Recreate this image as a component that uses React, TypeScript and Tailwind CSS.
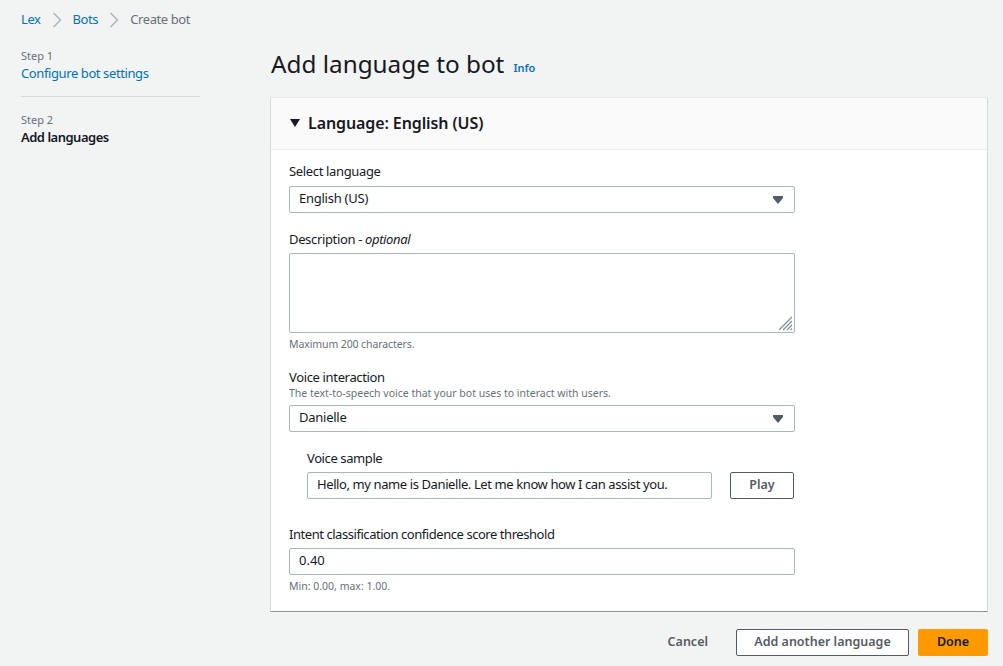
import React from 'react';

function Chevron() {
    return (
        <svg width="10" height="16" viewBox="0 0 10 16" fill="none" className="mx-[11px]">
            <path d="M1.5 1 L8.5 8 L1.5 15" stroke="#aab7b8" strokeWidth="1.5" />
        </svg>
    );
}

function Caret() {
    return (
        <svg width="10" height="8" viewBox="0 0 10 8" className="absolute right-[11px] top-[9px]">
            <path d="M0 0 H10 V2 L5 8 L0 2 Z" fill="#545b64" />
        </svg>
    );
}

function Select({ value }: { value: string }) {
    return (
        <div className="relative h-[27px] w-[506px] rounded-[2px] border border-[#aab7b8] bg-white pl-[9px] text-[13px] leading-[23px] tracking-[-0.25px] text-[#16191f]">
            {value}
            <Caret />
        </div>
    );
}

export default function App() {
    return (
        <div className="h-[666px] overflow-hidden bg-[#f2f3f3] font-['Noto_Sans',sans-serif] text-[#16191f]">
            <nav className="flex h-[39px] items-center pl-[21px] text-[13px] tracking-[-0.4px]">
                <a className="text-[#0073bb]">Lex</a>
                <Chevron />
                <a className="text-[#0073bb]">Bots</a>
                <Chevron />
                <span className="text-[#687078]">Create bot</span>
            </nav>
            <div className="flex">
                <aside className="ml-[21px] w-[179px] shrink-0 pt-[9px]">
                    <div className="text-[11px] leading-[15px] text-[#687078]">Step 1</div>
                    <a className="block text-[13px] leading-[20px] tracking-[-0.4px] text-[#0073bb]">Configure bot settings</a>
                    <div className="mt-[13px] border-t border-[#d5dbdb]" />
                    <div className="mt-[15px] text-[11px] leading-[15px] text-[#687078]">Step 2</div>
                    <div className="text-[13px] font-semibold leading-[20px] tracking-[-0.5px]">Add languages</div>
                </aside>
                <main className="ml-[70px] w-[718px] shrink-0">
                    <div className="mb-[8px] flex h-[50px] items-center pl-[1px]">
                        <h1 className="text-[24.3px] font-normal leading-[50px]">Add language to bot</h1>
                        <a className="ml-[9px] mt-[9px] text-[11px] font-semibold text-[#0073bb]">Info</a>
                    </div>
                    <section className="h-[515px] border-b border-l border-r border-b-[#879596] border-l-[#d5dbdb] border-r-[#d5dbdb] border-t border-t-[#eaeded] bg-white">
                        <div className="flex h-[52px] items-center border-b border-[#eaeded] bg-[#fafafa] pb-[2px] pl-[19px]">
                            <svg width="10" height="8" viewBox="0 0 10 8" className="mr-[8px]">
                                <path d="M0 0 H10 L5 8 Z" fill="#16191f" />
                            </svg>
                            <h2 className="text-[16px] font-semibold tracking-[-0.1px]">Language: English (US)</h2>
                        </div>
                        <div className="pl-[18px]">
                            <label className="mb-[5px] mt-[11px] block text-[13px] leading-[20px] tracking-[-0.35px]">Select language</label>
                            <Select value="English (US)" />
                            <label className="mb-[4px] mt-[16px] block text-[13px] leading-[20px] tracking-[-0.35px]">
                                Description - <i>optional</i>
                            </label>
                            <div className="relative h-[80px] w-[506px] rounded-[2px] border border-[#aab7b8] bg-white">
                                <svg width="15" height="15" viewBox="0 0 15 15" className="absolute bottom-[1px] right-[1px]">
                                    <path d="M1 14 L14 1 M5 14 L14 5 M9 14 L14 9 M12.5 14 L14 12.5" stroke="#7d8998" strokeWidth="1.1" />
                                </svg>
                            </div>
                            <p className="mt-[3px] text-[10.5px] leading-[16px] tracking-[-0.1px] text-[#687078]">Maximum 200 characters.</p>
                            <label className="mt-[16px] block text-[13px] leading-[18px] tracking-[-0.35px]">Voice interaction</label>
                            <p className="mb-[5px] text-[10.5px] leading-[14px] text-[#687078]">The text-to-speech voice that your bot uses to interact with users.</p>
                            <Select value="Danielle" />
                            <div className="ml-[18px] mt-[16px]">
                                <label className="mb-[4px] block text-[13px] leading-[20px] tracking-[-0.4px]">Voice sample</label>
                                <div className="flex items-center">
                                    <div className="h-[27px] w-[405px] rounded-[2px] border border-[#aab7b8] bg-white pl-[9px] text-[13px] leading-[23px] tracking-[-0.4px]">
                                        Hello, my name is Danielle. Let me know how I can assist you.
                                    </div>
                                    <button className="ml-[18px] h-[27px] w-[64px] rounded-[2px] border border-[#545b64] bg-white text-[12.5px] font-semibold text-[#545b64]">
                                        Play
                                    </button>
                                </div>
                            </div>
                            <label className="mb-[4px] mt-[25px] block text-[13px] leading-[20px] tracking-[-0.45px]">Intent classification confidence score threshold</label>
                            <div className="h-[27px] w-[506px] rounded-[2px] border border-[#aab7b8] bg-white pl-[9px] text-[13px] leading-[23px]">0.40</div>
                            <p className="mt-[3px] text-[10.5px] leading-[16px] text-[#687078]">Min: 0.00, max: 1.00.</p>
                        </div>
                    </section>
                    <div className="mt-[17px] flex items-center justify-end">
                        <button className="mr-[28px] text-[12.5px] font-semibold text-[#545b64]">Cancel</button>
                        <button className="h-[27px] w-[173px] rounded-[2px] border border-[#545b64] bg-white text-[12.5px] font-semibold text-[#545b64]">
                            Add another language
                        </button>
                        <button className="ml-[9px] h-[27px] w-[70px] rounded-[2px] bg-[#ff9900] text-[12.5px] font-semibold">Done</button>
                    </div>
                </main>
            </div>
        </div>
    );
}
